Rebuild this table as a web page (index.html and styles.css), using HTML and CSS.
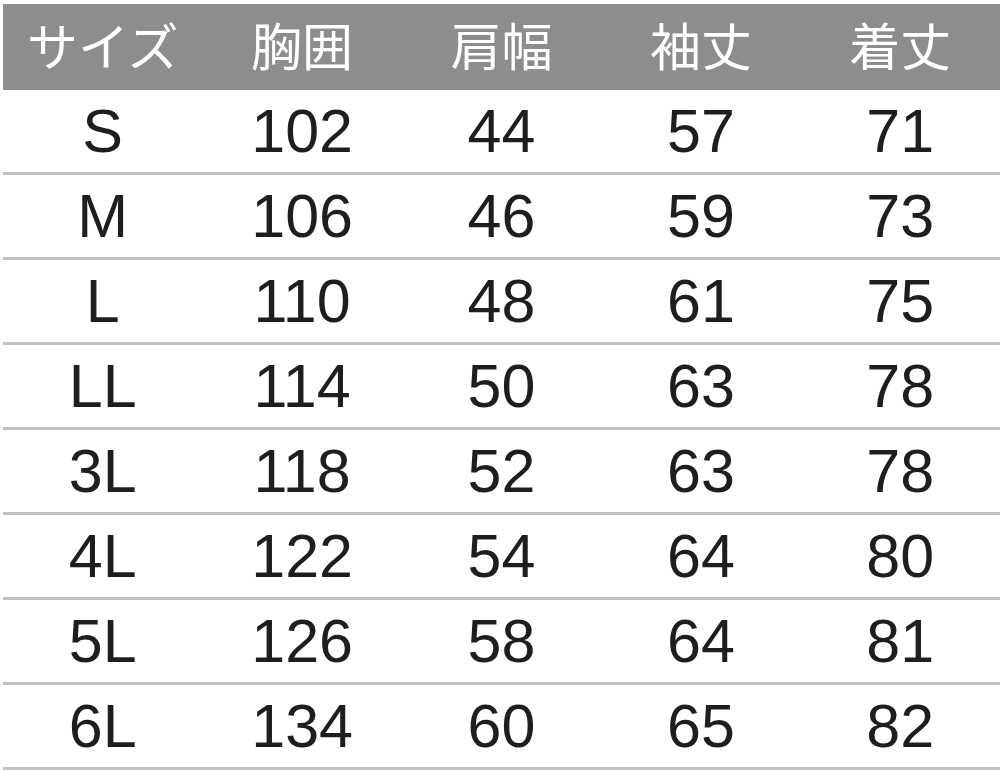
FILE: index.html
```html
<!DOCTYPE html>
<html lang="ja">
<head>
<meta charset="utf-8">
<title>サイズ表</title>
<link rel="stylesheet" href="styles.css">
</head>
<body>
<div class="sheet">
  <div class="row head">
    <div class="cell">サイズ</div><div class="cell">胸囲</div><div class="cell">肩幅</div><div class="cell">袖丈</div><div class="cell">着丈</div>
  </div>
  <div class="row"><div class="cell">S</div><div class="cell">102</div><div class="cell">44</div><div class="cell">57</div><div class="cell">71</div></div>
  <div class="row"><div class="cell">M</div><div class="cell">106</div><div class="cell">46</div><div class="cell">59</div><div class="cell">73</div></div>
  <div class="row"><div class="cell">L</div><div class="cell">110</div><div class="cell">48</div><div class="cell">61</div><div class="cell">75</div></div>
  <div class="row"><div class="cell">LL</div><div class="cell">114</div><div class="cell">50</div><div class="cell">63</div><div class="cell">78</div></div>
  <div class="row"><div class="cell">3L</div><div class="cell">118</div><div class="cell">52</div><div class="cell">63</div><div class="cell">78</div></div>
  <div class="row"><div class="cell">4L</div><div class="cell">122</div><div class="cell">54</div><div class="cell">64</div><div class="cell">80</div></div>
  <div class="row"><div class="cell">5L</div><div class="cell">126</div><div class="cell">58</div><div class="cell">64</div><div class="cell">81</div></div>
  <div class="row"><div class="cell">6L</div><div class="cell">134</div><div class="cell">60</div><div class="cell">65</div><div class="cell">82</div></div>
</div>
</body>
</html>
```
FILE: styles.css
```css
html, body {
  margin: 0;
  padding: 0;
  background: #ffffff;
}
.sheet {
  padding: 4px 0 0 3px;
  font-family: "Liberation Sans", "Noto Sans CJK JP", sans-serif;
  color: #1e1e1e;
}
.row {
  display: grid;
  grid-template-columns: repeat(5, 1fr);
  height: 82px;
  border-bottom: 3px solid #c2c2c2;
  align-items: center;
}
.cell {
  text-align: center;
  font-size: 61px;
  line-height: 1;
}
.row.head {
  height: 86px;
  background: #8d8d8d;
  border-bottom: none;
}
.row.head .cell {
  color: #ffffff;
  font-family: "Noto Sans CJK JP", sans-serif;
  font-size: 51px;
  font-weight: 400;
  padding-bottom: 6px;
}
```
